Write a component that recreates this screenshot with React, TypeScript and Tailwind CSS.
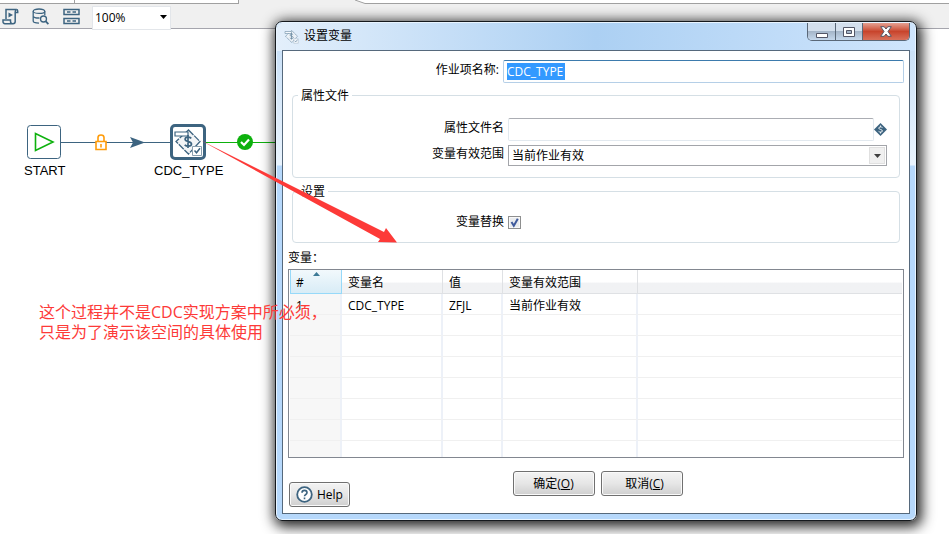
import React from "react";

const uiFont = "font-['Open_Sans','Noto_Sans_CJK_SC',sans-serif]";

function ScriptIcon() {
  return (
    <svg width="17" height="17" viewBox="0 0 17 17" fill="none" stroke="#3d6480" strokeWidth="1.5">
      <path d="M4 11V1.5h10.5c-1 .4-1.3 1.200-1.300 2.500v9.500c0 1.500-.8 2.200-2.200 2.200H3c-1.400 0-2-.9-2-2.200V12h7.500v1.500c0 1.400.8 2.200 2 2.200" />
      <path d="M13.300 4.500h2.400V3c0-1-.5-1.500-1.400-1.500" />
      <path d="M6.500 4.500v5l4.500-2.500z" fill="#3d6480" stroke="none" />
    </svg>
  );
}

function DatabaseSearchIcon() {
  return (
    <svg width="17" height="17" viewBox="0 0 17 17" fill="none" stroke="#3d6480" strokeWidth="1.300">
      <ellipse cx="7" cy="3.200" rx="5.800" ry="2.200" />
      <path d="M1.200 3.200v9.800c0 1.300 2.500 2.100 5.800 2.100M12.800 3.200v4M1.200 8c0 1.300 2.500 2.100 6.300 2" />
      <circle cx="11.500" cy="11" r="3" />
      <path d="M13.600 13.100l2.800 3" strokeWidth="1.800" />
    </svg>
  );
}

function RowsIcon() {
  return (
    <svg width="17" height="17" viewBox="0 0 17 17" fill="none" stroke="#3d6480" strokeWidth="1.500">
      <path d="M1 1.500h15v5H1zM1 10.500h15v5H1z" />
      <path d="M4 4h3.500M9.500 4H13M4 13h3.500M9.500 13H13" />
    </svg>
  );
}

function VariableIcon({ size }: { size: number }) {
  return (
    <svg width={size} height={size} viewBox="0 0 30 30" fill="none" stroke="#3d6480">
      <path d="M15.500 3L27 14.500 15.500 27 3 14.500z" fill="#f2f4f6" strokeWidth="1.300" strokeDasharray="7 1" />
      <path d="M2 5h13v4H2z" fill="#fff" strokeWidth="1.200" />
      <path d="M15 8v13M18.300 11.300c-1-.9-2-1.200-3.200-1.200-1.800 0-3 .8-3 2.200 0 3.100 6.400 1.600 6.400 4.700 0 1.500-1.400 2.200-3.200 2.200-1.500 0-2.600-.4-3.600-1.400" strokeWidth="1.700" />
      <path d="M19.500 19.500h9v9h-9z" fill="#fff" stroke="#8a9fae" strokeWidth="1" />
      <path d="M21.500 23.500l2 2.300 3.500-4.500" strokeWidth="1.500" />
    </svg>
  );
}

function TopBar() {
  return (
    <header className={`bg-[#f0f0f0] ${uiFont}`}>
      <div className="flex h-1">
        <div className="w-[75px] border-r border-b border-[#a0a0a0] bg-white" />
        <div className="w-[164px] border-r border-b border-[#a0a0a0] bg-white" />
        <svg className="ml-auto h-1 w-[594px]" viewBox="0 0 594 4" preserveAspectRatio="none">
          <path d="M0 0l10 3.500h584V0z" fill="#fff" />
          <path d="M0 0l10 3.500h584" fill="none" stroke="#a0a0a0" />
        </svg>
      </div>
      <div className="flex h-[25px] items-center border-b border-[#a5a5ad] pl-[2px]">
        <button type="button" aria-label="Script"><ScriptIcon /></button>
        <button type="button" aria-label="Explore database" className="ml-[13px]"><DatabaseSearchIcon /></button>
        <button type="button" aria-label="Results" className="ml-[14px]"><RowsIcon /></button>
        <div className="relative ml-3 h-6 w-[79px]">
          <select aria-label="Zoom" className="h-6 w-full appearance-none border border-[#e3e6ea] bg-white pl-[2px] text-[12px] text-black">
            <option>100%</option>
          </select>
          <svg className="pointer-events-none absolute top-[11px] right-1" width="7" height="4" viewBox="0 0 7 4">
            <path d="M0 0h7L3.500 4z" />
          </svg>
        </div>
      </div>
    </header>
  );
}

function JobGraph() {
  return (
    <div className="font-['Liberation_Sans',sans-serif] text-[13px] leading-4 text-black">
      <svg className="absolute top-[124px] left-0" width="284" height="36" viewBox="0 0 284 36" fill="none">
        <path d="M61 18.500h109" stroke="#3d6480" />
        <path d="M206 18.500h76" stroke="#0db10d" />
        <path d="M130 13l15 5.500-15 5.500 3-5.500z" fill="#3d6480" />
        <path d="M96 17.500h10v8H96z" fill="#fff" stroke="#ff9c0a" strokeWidth="1.600" />
        <path d="M98 17v-3.500c0-3.400 6-3.400 6 0V17M101 20v3.500" stroke="#ff9c0a" strokeWidth="1.600" />
        <circle cx="245" cy="18" r="8" fill="#0db10d" />
        <path d="M241 18l3 3 5-5.500" stroke="#fff" strokeWidth="2.200" />
        <rect x="27.500" y="1.500" width="33" height="33" rx="3" fill="#fff" stroke="#3d6480" />
        <path d="M35.500 9.500v17L53 18z" stroke="#0db10d" strokeWidth="1.600" />
      </svg>
      <div className="absolute top-[124px] left-[170px] flex size-9 items-center justify-center rounded-[5px] border-3 border-[#3d6480] bg-white">
        <VariableIcon size={30} />
      </div>
      <span className="absolute top-[163px] left-6">START</span>
      <span className="absolute top-[163px] left-[154px]">CDC_TYPE</span>
    </div>
  );
}

function TitleBar() {
  return (
    <div className="flex h-7 items-start justify-between">
      <h1 className="flex items-center gap-[5px] pt-1 pl-[2px] text-[12px] leading-[18px] font-normal">
        <span className="opacity-70"><VariableIcon size={15} /></span>
        设置变量
      </h1>
      <div className="flex h-[18px] overflow-hidden rounded-b-[5px] border border-t-0 border-[#5a6878]">
        <button type="button" aria-label="Minimize" className="flex w-7 items-center justify-center border-r border-[#5a6878] bg-linear-to-b from-[#d3dfec] from-45% via-[#a5b6c9] via-50% to-[#c5d8ec]">
          <svg width="12" height="14" viewBox="0 0 12 14"><path d="M.5 8.500h11v4H.5z" fill="#fff" stroke="#535666" /></svg>
        </button>
        <button type="button" aria-label="Maximize" className="flex w-[27px] items-center justify-center border-r border-[#5a6878] bg-linear-to-b from-[#d3dfec] from-45% via-[#a5b6c9] via-50% to-[#c5d8ec]">
          <svg width="12" height="10" viewBox="0 0 12 10"><path d="M.5.5h11v9H.5z" fill="#fff" stroke="#535666" /><path d="M3.500 3.500h5v3h-5z" fill="#a5b6c9" stroke="#535666" /></svg>
        </button>
        <button type="button" aria-label="Close" className="flex w-[46px] items-center justify-center bg-linear-to-b from-[#e4a092] from-0% via-[#c8442c] via-50% to-[#d8705a]">
          <svg width="12" height="11" viewBox="0 0 12 11"><path d="M.7.7h3.500L6 3 7.800.7h3.500L8 5.500l3.300 4.800H7.800L6 8l-1.800 2.300H.7L4 5.500z" fill="#fff" stroke="#535666" /></svg>
        </button>
      </div>
    </div>
  );
}

function Group({ title, className, children }: { title: string; className: string; children: React.ReactNode }) {
  return (
    <fieldset className={`mr-[9px] ml-[9px] rounded-[4px] border border-[#d5dfe5] ${className}`}>
      <legend className="ml-[5px] px-[3px] pt-[2px] leading-4">{title}</legend>
      {children}
    </fieldset>
  );
}

function VariableTable() {
  const head = "border-r border-b border-[#dfe1e4] pt-[2px] pl-[6px] text-left font-normal";
  const cell = "border-r-2 border-[#edf1f8] pt-[3px] pl-[6px]";
  const rows = [["1", "CDC_TYPE", "ZFJL", "当前作业有效"], ...Array.from({ length: 6 }, () => ["", "", "", ""])];
  return (
    <div className="mr-[5px] ml-[5px] h-[189px] overflow-hidden border border-[#828790] px-px">
      <table aria-labelledby="variables-label" className="w-full table-fixed border-separate border-spacing-0">
        <colgroup>
          <col className="w-[52px]" />
          <col className="w-[101px]" />
          <col className="w-[60px]" />
          <col className="w-[135px]" />
          <col />
        </colgroup>
        <thead>
          <tr className="h-6 bg-linear-to-b from-white from-50% to-[#f1f2f4] to-55%">
            <th aria-sort="ascending" className="relative border border-t-0 border-[#96d9f9] bg-linear-to-b from-[#f2f9fc] to-[#d8ecf6] pt-[2px] pl-[5px] text-left font-normal">
              #
              <svg className="absolute top-[2px] left-[22px]" width="7" height="4" viewBox="0 0 7 4"><path d="M0 4l3.500-4L7 4z" fill="#3c7a96" /></svg>
            </th>
            <th className={head}>变量名</th>
            <th className={head}>值</th>
            <th className={head}>变量有效范围</th>
            <th className="border-b border-[#dfe1e4]" />
          </tr>
        </thead>
        <tbody>
          {rows.map((row, i) => (
            <tr key={i} className="h-[21px]">
              {row.map((value, j) => (
                <td key={j} className={`${cell} border-b border-b-[#f0f0f0] ${j === 0 ? "bg-[#f7f7f7]" : ""}`}>{value}</td>
              ))}
              <td className="border-b border-[#f0f0f0]" />
            </tr>
          ))}
          <tr className="h-[21px]">
            <td className={`${cell} bg-[#f7f7f7]`} />
            <td className={cell} />
            <td className={cell} />
            <td className={cell} />
            <td />
          </tr>
        </tbody>
      </table>
    </div>
  );
}

const buttonStyle =
  "h-[25px] rounded-[3px] border border-[#707070] bg-linear-to-b from-[#f3f3f3] from-0% via-[#e6e6e6] via-50% to-[#cfcfcf] shadow-[inset_0_0_0_1px_#fafafa]";

function VariablesDialog() {
  return (
    <section
      role="dialog"
      aria-label="设置变量"
      className={`absolute top-[21px] right-8 left-[275px] rounded-[7px] border border-[#15191d] bg-linear-to-b from-[#c3dcf5] from-0% via-[#eaf4fe] via-[143px] to-[#b6d8fb] to-[144px] px-[6px] pb-[6px] text-[12px] leading-4 text-black shadow-[inset_0_0_0_1px_#e8f4ff,2px_3px_13px_3px_rgba(0,0,0,0.85)] ${uiFont}`}
    >
      <div className="-mx-[5px] mt-px -mb-px rounded-t-[6px] bg-linear-to-r from-[#e3effb] via-[#acd0f3] via-50% to-[#cfe5fc] px-[5px]">
        <TitleBar />
      </div>
      <div className="border border-[#56697c] bg-white">
        <div className="mt-[9px] mr-[5px] flex h-[23px] items-center">
          <label htmlFor="entry-name" className="w-[216px] pb-1 text-right">作业项名称:</label>
          <div className="ml-1 flex h-full flex-1 rounded-[2px] border border-[#b5cfe7] border-t-[#3d7bad]">
            <input
              id="entry-name"
              defaultValue="CDC_TYPE"
              className="my-[2px] ml-[3px] field-sizing-content bg-[#3399ff] pr-[2px] text-white outline-none"
            />
          </div>
        </div>

        <Group title="属性文件" className="mt-[3px] h-[92px]">
          <div className="mt-[14px] flex h-[23px] items-center">
            <label htmlFor="file-name" className="w-[211px] pb-1 text-right">属性文件名</label>
            <input id="file-name" className="ml-1 h-full min-w-0 flex-1 rounded-[2px] border border-[#e2e9ef] border-t-[#abadb3] px-1" />
            <svg className="mr-3 shrink-0" width="13" height="13" viewBox="0 0 13 13">
              <path d="M6.500 0L13 6.500 6.500 13 0 6.500z" fill="#3d6480" />
              <path d="M8.500 4.600c-.9-.9-3.800-.9-3.800.5 0 1.600 3.800 1.200 3.800 2.900 0 1.400-2.900 1.400-3.900.4" fill="none" stroke="#e8eef2" />
              <path d="M6.500 2.500V4M6.500 9v1.500" stroke="#e8eef2" />
            </svg>
          </div>
          <div className="mt-1 mr-3 flex h-[21px] items-center">
            <label htmlFor="scope" className="w-[211px] pb-1 text-right">变量有效范围</label>
            <div className="relative ml-1 h-[21px] flex-1">
              <select id="scope" className="h-[21px] w-full appearance-none border border-[#a3a5aa] bg-white pl-[3px]">
                <option>当前作业有效</option>
              </select>
              <span className="pointer-events-none absolute top-[2px] right-[2px] flex h-[17px] w-4 items-center justify-center border border-[#e0e0e0] bg-[#f0f0f0]">
                <svg width="7" height="4" viewBox="0 0 7 4"><path d="M0 0h7L3.500 4z" fill="#404040" /></svg>
              </span>
            </div>
          </div>
        </Group>

        <Group title="设置" className="mt-1 h-[61px]">
          <div className="mt-[14px] flex items-center">
            <label htmlFor="substitute" className="w-[211px] text-right">变量替换</label>
            <span className="relative ml-1 flex">
              <input
                id="substitute"
                type="checkbox"
                defaultChecked
                className="peer size-[13px] appearance-none border border-[#8e8f8f] bg-[#e9ebee] shadow-[inset_0_0_0_1px_#f8f8f8]"
              />
              <svg className="pointer-events-none absolute inset-0 hidden peer-checked:block" width="13" height="13" viewBox="0 0 13 13">
                <path d="M3.500 6l2.300 3.700L9.800 2.800" fill="none" stroke="#3f5a9c" strokeWidth="2" />
              </svg>
            </span>
          </div>
        </Group>

        <p id="variables-label" className="mt-[7px] mb-[3px] ml-[5px]">变量：</p>
        <VariableTable />

        <div className="relative flex h-[55px] justify-center gap-[6px] pt-[13px] pl-[3px]">
          <button type="button" className={`w-[82px] ${buttonStyle}`}>确定(<u>O</u>)</button>
          <button type="button" className={`w-[82px] pl-[6px] ${buttonStyle}`}>取消(<u>C</u>)</button>
          <button type="button" className={`absolute bottom-[6px] left-[6px] flex w-[61px] items-center gap-1 pl-[6px] ${buttonStyle}`}>
            <svg width="17" height="17" viewBox="0 0 17 17" fill="none" stroke="#3d6480">
              <circle cx="8.500" cy="8.500" r="7.300" fill="#fff" strokeWidth="1.800" />
              <path d="M6 6.800c0-3.200 5-3.200 5 0 0 1.700-2.500 1.700-2.500 3.500M8.500 11.500v1.700" strokeWidth="1.600" />
            </svg>
            Help
          </button>
        </div>
      </div>
    </section>
  );
}

function Annotations() {
  return (
    <div className="pointer-events-none">
      <svg className="absolute top-[138px] left-[198px]" width="202" height="106" viewBox="0 0 202 106">
        <path d="M2 2l184 92 2-4 11 14.500-19-.5 2-3z" fill="#fd3a38" />
      </svg>
      <p className={`absolute top-[302px] left-[39px] text-[16px] leading-5 whitespace-nowrap text-[#fd3a38] ${uiFont}`}>
        这个过程并不是CDC实现方案中所必须，
        <br />
        只是为了演示该空间的具体使用
      </p>
    </div>
  );
}

export default function App() {
  return (
    <main className="relative min-h-screen overflow-hidden bg-white">
      <TopBar />
      <JobGraph />
      <VariablesDialog />
      <Annotations />
    </main>
  );
}
